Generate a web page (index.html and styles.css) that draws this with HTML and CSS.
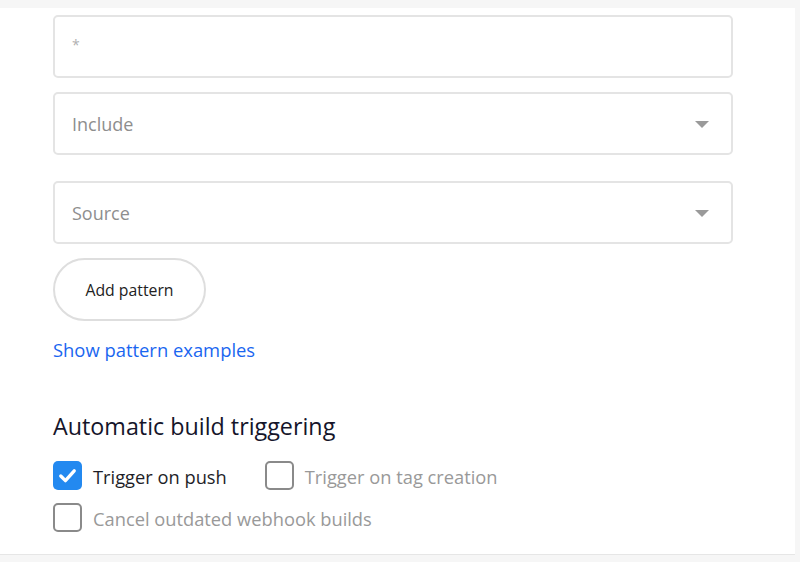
FILE: index.html
```html
<!DOCTYPE html>
<html>
<head>
<meta charset="utf-8">
<link rel="stylesheet" href="styles.css">
</head>
<body>
<div class="panel">
  <div class="field field-text"><span class="ph-star">*</span></div>
  <div class="field field-select first-select">
    <span class="ph">Include</span>
    <span class="caret"></span>
  </div>
  <div class="field field-select second-select">
    <span class="ph">Source</span>
    <span class="caret"></span>
  </div>
  <button class="pill">Add pattern</button>
  <a class="link" href="#">Show pattern examples</a>
  <h2 class="heading">Automatic build triggering</h2>
  <div class="checks">
    <div class="check-row">
      <label class="check on"><span class="box"><svg viewBox="0 0 28 28" width="28" height="28"><path d="M7.5 14.5 L12 19 L20.5 9.5" fill="none" stroke="#fff" stroke-width="3.2" stroke-linecap="round" stroke-linejoin="round"/></svg></span><span class="lbl">Trigger on push</span></label>
      <label class="check off"><span class="box"></span><span class="lbl">Trigger on tag creation</span></label>
    </div>
    <div class="check-row">
      <label class="check off"><span class="box"></span><span class="lbl">Cancel outdated webhook builds</span></label>
    </div>
  </div>
</div>
<div class="footer"></div>
</body>
</html>
```
FILE: styles.css
```css
html, body {
  margin: 0;
  padding: 0;
}
body {
  background: #f6f6f6;
  font-family: "Open Sans", "Liberation Sans", sans-serif;
  width: 800px;
  height: 562px;
  overflow: hidden;
}
.panel {
  margin-top: 8px;
  margin-right: 5px;
  background: #fff;
  height: 547px;
  padding: 7px 0 0 53px;
  box-sizing: border-box;
  border-bottom: 1px solid #e6e6e6;
}
.field {
  width: 680px;
  height: 63px;
  box-sizing: border-box;
  border: 2px solid #e4e4e4;
  border-radius: 5px;
  display: flex;
  align-items: center;
  padding: 0 22px 0 17px;
}
.field-text {
  align-items: flex-start;
  padding-top: 18px;
}
.ph-star {
  color: #b0b0b0;
  font-size: 14px;
}
.first-select {
  margin-top: 14px;
}
.second-select {
  margin-top: 26px;
}
.field-select {
  justify-content: space-between;
}
.ph {
  color: #8e8e8e;
  font-size: 18px;
  line-height: 22px;
}
.caret {
  width: 0;
  height: 0;
  border-left: 7px solid transparent;
  border-right: 7px solid transparent;
  border-top: 7px solid #9a9a9a;
  margin-top: 1px;
}
.pill {
  display: block;
  margin-top: 14px;
  width: 153px;
  height: 63px;
  border: 2px solid #dedede;
  border-radius: 32px;
  background: #fff;
  font-family: inherit;
  font-size: 15.8px;
  color: #222;
  padding: 0;
}
.link {
  display: inline-block;
  margin-top: 19px;
  color: #1a66f0;
  text-decoration: none;
  font-size: 18.4px;
  line-height: 20px;
}
.heading {
  margin: 50px 0 0 0;
  font-size: 23.3px;
  font-weight: 400;
  color: #15152a;
  line-height: 28px;
}
.checks {
  margin-top: 21px;
  display: flex;
  flex-direction: column;
  gap: 13px;
}
.check-row {
  display: flex;
  gap: 38px;
}
.check {
  display: flex;
  align-items: center;
  gap: 11px;
  font-size: 18.3px;
  line-height: 22px;
}
.lbl {
  padding-top: 2px;
}
.box {
  width: 29px;
  height: 29px;
  box-sizing: border-box;
  border-radius: 5px;
  display: block;
}
.on .box {
  background: #2389f0;
}
.on .box svg {
  display: block;
  width: 29px;
  height: 29px;
}
.on .lbl {
  color: #1e1e28;
}
.off .box {
  border: 2px solid #8a8a8a;
}
.off .lbl {
  color: #999;
}
.footer {
  height: 7px;
  background: #f6f6f6;
}
```
